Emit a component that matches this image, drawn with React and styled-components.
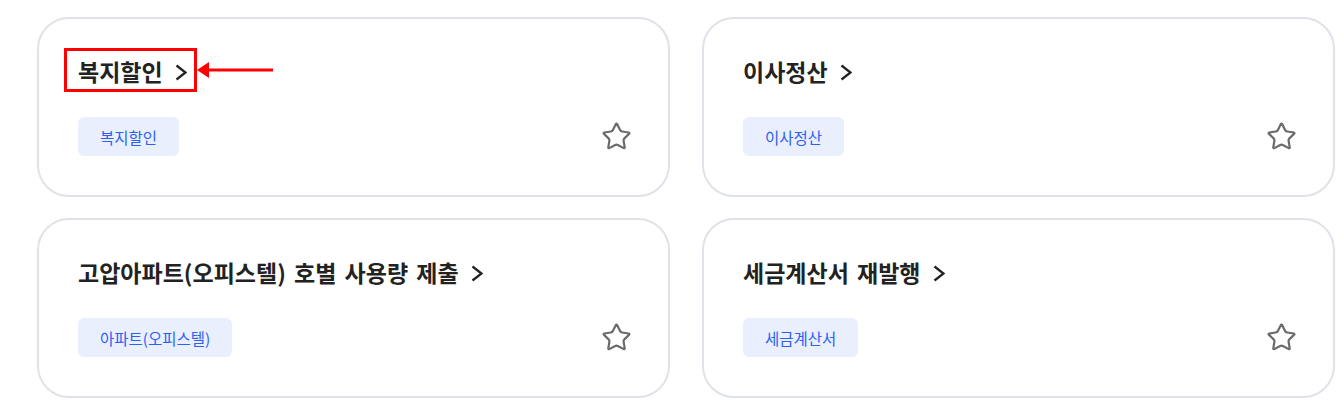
import React from 'react';
import styled, { createGlobalStyle } from 'styled-components';
import { Star } from 'lucide-react';

const GlobalStyle = createGlobalStyle`
  body {
    margin: 0;
    background: #fff;
    font-family: "Noto Sans CJK KR", "Noto Sans", sans-serif;
  }
`;

const Grid = styled.div`
  display: grid;
  grid-template-columns: 633px 633px;
  gap: 21px 32px;
  padding: 17px 0 0 37px;
`;

const Card = styled.div`
  box-sizing: border-box;
  height: 180px;
  border: 2px solid #dfe2e8;
  border-radius: 32px;
  background: #fff;
  padding: 36px 39px 39px 39px;
  display: flex;
  flex-direction: column;
  justify-content: space-between;
`;

const TitleRow = styled.div`
  display: flex;
`;

const Title = styled.a`
  position: relative;
  display: inline-flex;
  align-items: center;
  font-size: 23px;
  font-weight: 700;
  line-height: 32px;
  word-spacing: 3px;
  color: #222;
  text-decoration: none;
  cursor: pointer;
`;

const Chevron = styled.svg`
  margin-left: 12px;
  margin-top: 2px;
  color: #222;
`;

const Highlight = styled.span`
  position: absolute;
  left: -14px;
  top: -7px;
  width: 133px;
  height: 44px;
  box-sizing: border-box;
  border: 3px solid #f00;
  pointer-events: none;
`;

const Arrow = styled.svg`
  position: absolute;
  left: 119px;
  top: 3px;
  overflow: visible;
`;

const Bottom = styled.div`
  display: flex;
  align-items: center;
  justify-content: space-between;
`;

const Tag = styled.span`
  display: inline-flex;
  align-items: center;
  height: 39px;
  padding: 0 22px;
  border-radius: 6px;
  background: #e9effc;
  color: #2d5ff5;
  font-size: 15.5px;
`;

const FavButton = styled.button`
  border: 0;
  background: none;
  padding: 0;
  margin-right: -3px;
  display: flex;
  color: #6b6b6b;
  cursor: pointer;
`;

const items = [
  { title: '복지할인', tag: '복지할인', marked: true },
  { title: '이사정산', tag: '이사정산' },
  { title: '고압아파트(오피스텔) 호별 사용량 제출', tag: '아파트(오피스텔)' },
  { title: '세금계산서 재발행', tag: '세금계산서' },
];

export default function App() {
  return (
    <>
      <GlobalStyle />
      <Grid>
        {items.map((item, i) => (
          <Card key={i}>
            <TitleRow>
              <Title>
                {item.title}
                <Chevron width="12" height="17" viewBox="0 0 12 17" fill="none">
                  <polyline points="1.5,1.5 10.5,8.5 1.5,15.5" stroke="currentColor" strokeWidth="2.3" />
                </Chevron>
                {item.marked && (
                  <>
                    <Highlight />
                    <Arrow width="76" height="24" viewBox="0 0 76 24">
                      <line x1="10" y1="12" x2="76" y2="12" stroke="#f00" strokeWidth="3" />
                      <polygon points="0,12 12,4 12,20" fill="#f00" />
                    </Arrow>
                  </>
                )}
              </Title>
            </TitleRow>
            <Bottom>
              <Tag>{item.tag}</Tag>
              <FavButton aria-label="즐겨찾기">
                <Star size={31} strokeWidth={1.7} />
              </FavButton>
            </Bottom>
          </Card>
        ))}
      </Grid>
    </>
  );
}
